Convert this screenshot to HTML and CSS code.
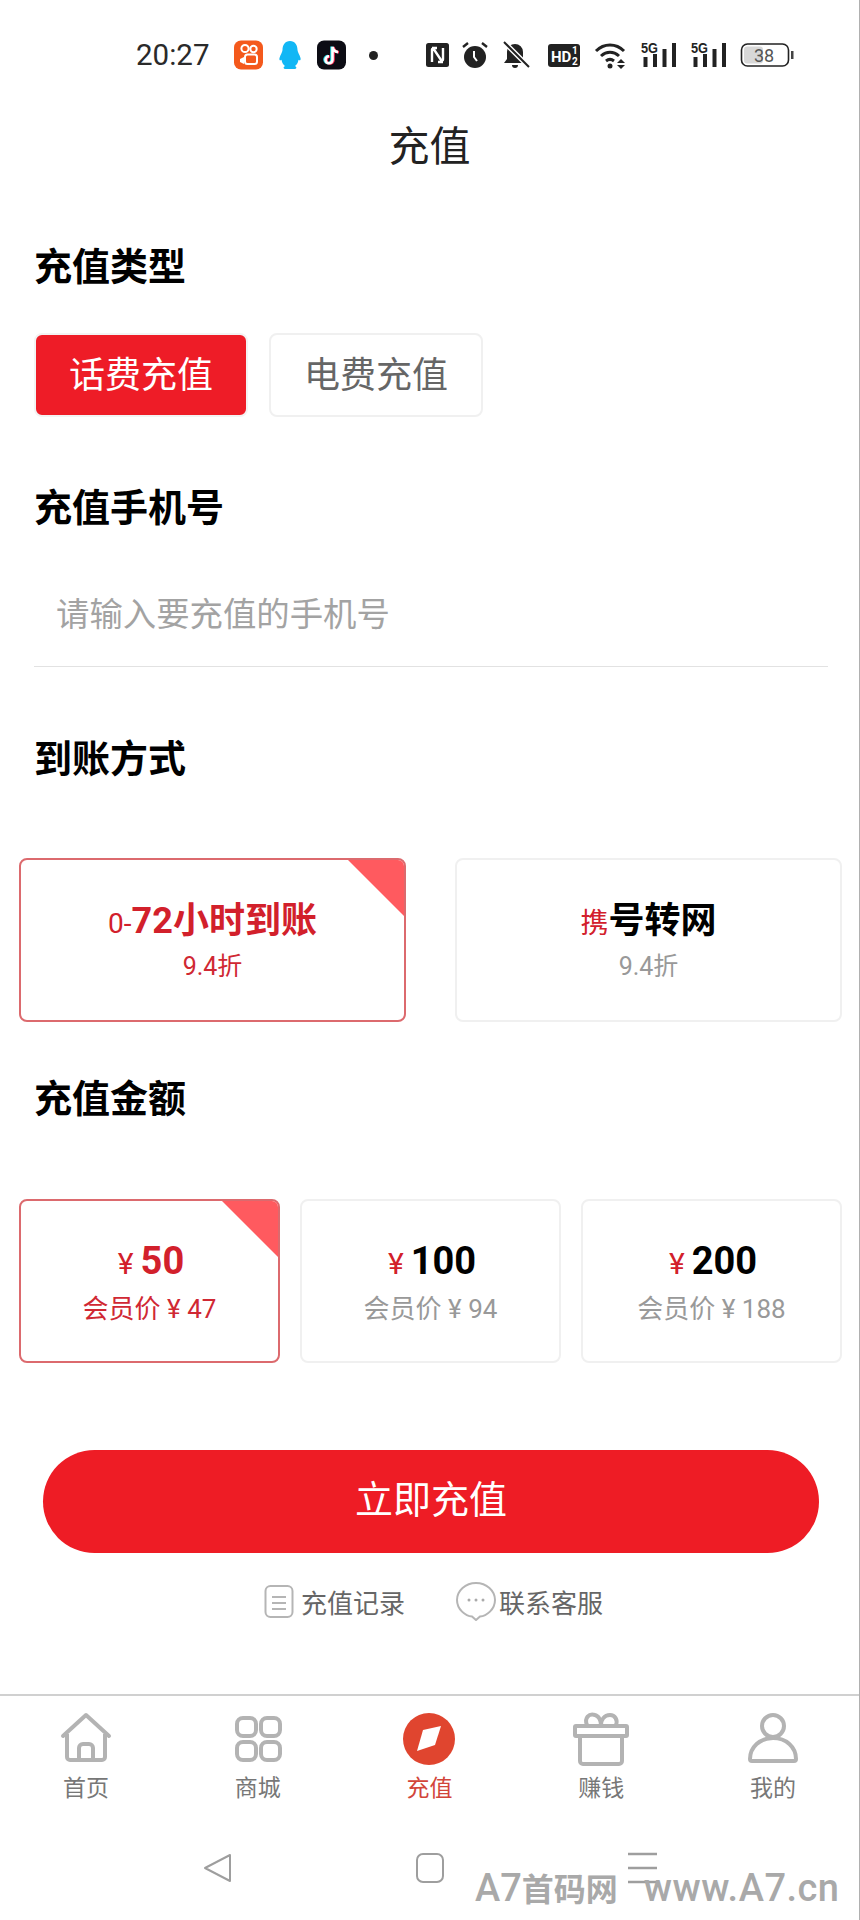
FILE: index.html
```html
<!DOCTYPE html>
<html lang="zh-CN">
<head>
	<meta charset="UTF-8"/>
	<title>充值</title>
	<link rel="stylesheet" href="styles.css">
</head>
<body>
	<div class="page">
		<div class="status">
			<span class="time">20:27</span>
			<div class="apps">
				<svg width="29" height="30" viewBox="0 0 29 30"><rect width="29" height="29" y="0.5" rx="7" fill="#f4591c"/><circle cx="11" cy="8.5" r="3.6" fill="none" stroke="#fff" stroke-width="2"/><circle cx="19.5" cy="9" r="3.2" fill="none" stroke="#fff" stroke-width="2"/><rect x="11" y="14.5" width="12" height="9.5" rx="2.5" fill="none" stroke="#fff" stroke-width="2"/><path d="M10 17l-4 2v3l4 2z" fill="#fff"/></svg>
				<svg width="24" height="30" viewBox="0 0 24 30"><path d="M12 1c5 0 7.500 4 7.500 9 0 2 2 4.500 3 8 .5 2-.5 3-2 1.800C20 23 18.500 25 17 26c2 1 2 3-1 3H8c-3 0-3-2-1-3-1.500-1-3-3-3.500-6.200C2 21 1 20 1.500 18c1-3.500 3-6 3-8 0-5 2.500-9 7.500-9z" fill="#12b7f5"/></svg>
				<svg width="29" height="30" viewBox="0 0 29 30"><rect width="29" height="29" y="0.500" rx="7" fill="#0c0c14"/><path d="M15.500 6v13a3.500 3.500 0 1 1-3.500-3.500M15.500 6c.5 3 2.500 5 5.500 5.300" fill="none" stroke="#25d9e6" stroke-width="2.600" transform="translate(-1 .6)"/><path d="M15.500 6v13a3.500 3.500 0 1 1-3.500-3.500M15.500 6c.5 3 2.500 5 5.500 5.300" fill="none" stroke="#fe2c55" stroke-width="2.600" transform="translate(1 1)"/><path d="M15.500 6v13a3.500 3.500 0 1 1-3.500-3.500M15.500 6c.5 3 2.500 5 5.500 5.300" fill="none" stroke="#fff" stroke-width="2.600" transform="translate(0 .8)"/></svg>
			</div>
			<i class="dot"></i>
			<div class="sys">
				<svg width="24" height="30" viewBox="0 0 24 30"><rect y="3" width="23" height="24" rx="2.500" fill="#222"/><path d="M6 22V9.500c0-1 1-1.200 1.700-.4L15 20c.6.800 2 .6 2-.4V8M6 8h5M17 22h-5" fill="none" stroke="#fff" stroke-width="2.400"/></svg>
				<svg width="28" height="30" viewBox="0 0 28 30"><circle cx="13" cy="17" r="11" fill="#222"/><path d="M12 11v6l3 4" fill="none" stroke="#fff" stroke-width="2"/><path d="M1 7l5-4M25 7l-5-4" stroke="#222" stroke-width="2.400"/></svg>
				<svg width="32" height="30" viewBox="0 0 32 30"><path d="M13 4a8 8 0 0 1 8 8v7l3 4H2l3-4v-7a8 8 0 0 1 8-8z" fill="#222"/><path d="M10 25a3 3 0 0 0 6 0z" fill="#222"/><path d="M2 2l25 25" stroke="#fff" stroke-width="5"/><path d="M2 2l25 25" stroke="#222" stroke-width="2"/></svg>
				<svg width="36" height="30" viewBox="0 0 36 30"><rect x="2" y="4" width="32" height="23" rx="3" fill="#222"/><text x="5" y="22" class="hd">HD</text><text x="26" y="14" class="hd-small">1</text><text x="26" y="25" class="hd-small">2</text></svg>
				<svg width="34" height="30" viewBox="0 0 34 30"><path d="M2 11c8-8 20-8 28 0M7 16c5.500-5 12.500-5 18 0M12 21c2.500-2 5.500-2 8 0" fill="none" stroke="#222" stroke-width="3"/><circle cx="16" cy="26" r="2.500" fill="#222"/><path d="M27 19l4 4h-8zM27 29l4-4h-8z" fill="#222"/></svg>
				<svg width="38" height="30" viewBox="0 0 38 30"><text x="1" y="13" class="five" textLength="17" lengthAdjust="spacingAndGlyphs">5G</text><rect x="3.500" y="17" width="4" height="10" fill="#222"/><rect x="13" y="14" width="4" height="13" fill="#222"/><rect x="22.500" y="9" width="4" height="18" fill="#222"/><rect x="32" y="3" width="4" height="24" fill="#222"/></svg>
				<svg width="38" height="30" viewBox="0 0 38 30"><text x="1" y="13" class="five" textLength="17" lengthAdjust="spacingAndGlyphs">5G</text><rect x="3.500" y="17" width="4" height="10" fill="#222"/><rect x="13" y="14" width="4" height="13" fill="#222"/><rect x="22.500" y="9" width="4" height="18" fill="#222"/><rect x="32" y="3" width="4" height="24" fill="#222"/></svg>
				<svg width="55" height="30" viewBox="0 0 55 30"><rect x="1.500" y="4" width="47" height="22" rx="6" fill="#fff" stroke="#222" stroke-width="1.600"/><rect x="4" y="6.500" width="19" height="17" rx="3" fill="#d8d8d8"/><text x="14" y="21.500" class="batt">38</text><rect x="51" y="11" width="2.500" height="8" fill="#444"/></svg>
			</div>
		</div>

		<div class="title">充值</div>

		<div class="heading first">充值类型</div>
		<div class="types">
			<div class="type active">话费充值</div>
			<div class="type">电费充值</div>
		</div>

		<div class="heading phone">充值手机号</div>
		<div class="field">请输入要充值的手机号</div>

		<div class="heading method">到账方式</div>
		<div class="cards">
			<div class="card wide on">
				<i class="corner"></i>
				<div class="card-main"><span class="thin">0-</span>72小时到账</div>
				<div class="card-sub">9.4折</div>
			</div>
			<div class="card wide">
				<div class="card-main"><span class="thin red">携</span>号转网</div>
				<div class="card-sub">9.4折</div>
			</div>
		</div>

		<div class="heading amount">充值金额</div>
		<div class="cards prices">
			<div class="card on">
				<i class="corner"></i>
				<div class="card-price"><span class="yen">¥</span>50</div>
				<div class="card-vip">会员价 ¥ 47</div>
			</div>
			<div class="card">
				<div class="card-price"><span class="yen">¥</span>100</div>
				<div class="card-vip">会员价 ¥ 94</div>
			</div>
			<div class="card">
				<div class="card-price"><span class="yen">¥</span>200</div>
				<div class="card-vip">会员价 ¥ 188</div>
			</div>
		</div>

		<div class="submit">立即充值</div>

		<div class="links">
			<div class="link">
				<svg width="30" height="36" viewBox="0 0 30 36"><rect x="1.500" y="3" width="27" height="31" rx="5" fill="none" stroke="#b5b5b5" stroke-width="2"/><path d="M9 2h12" stroke="#fff" stroke-width="4"/><path d="M9 3h12M8 14h14M8 20h14M8 26h14" stroke="#b5b5b5" stroke-width="1.800"/></svg>
				<span>充值记录</span>
			</div>
			<div class="link chat">
				<svg width="40" height="40" viewBox="0 0 40 40"><path d="M20 2c10.500 0 19 7.500 19 17s-8.500 16-15 16.500L20 39l-4-3.500C9.500 35 1 28.500 1 19S9.500 2 20 2z" fill="none" stroke="#b5b5b5" stroke-width="2"/><circle cx="13" cy="19" r="1.500" fill="#aaa"/><circle cx="20" cy="19" r="1.500" fill="#aaa"/><circle cx="27" cy="19" r="1.500" fill="#aaa"/></svg>
				<span>联系客服</span>
			</div>
		</div>

		<div class="tabs">
			<div class="tab">
				<svg width="60" height="60" viewBox="0 0 60 60"><path d="M7 27L30 6l23 21" fill="none" stroke="#b3b3b3" stroke-width="4" stroke-linejoin="round" stroke-linecap="round"/><path d="M11 25v23a3 3 0 0 0 3 3h32a3 3 0 0 0 3-3V25" fill="none" stroke="#b3b3b3" stroke-width="4"/><path d="M23 51V39a4 4 0 0 1 4-4h6a4 4 0 0 1 4 4v12" fill="none" stroke="#b3b3b3" stroke-width="4"/></svg>
				<span>首页</span>
			</div>
			<div class="tab">
				<svg width="60" height="60" viewBox="0 0 60 60"><rect x="9" y="9" width="19" height="18" rx="6" fill="none" stroke="#b3b3b3" stroke-width="4"/><rect x="33" y="9" width="19" height="18" rx="6" fill="none" stroke="#b3b3b3" stroke-width="4"/><rect x="9" y="33" width="19" height="18" rx="6" fill="none" stroke="#b3b3b3" stroke-width="4"/><rect x="33" y="33" width="19" height="18" rx="6" fill="none" stroke="#b3b3b3" stroke-width="4"/></svg>
				<span>商城</span>
			</div>
			<div class="tab current">
				<svg width="60" height="60" viewBox="0 0 60 60"><circle cx="30" cy="30" r="26" fill="#e0452f"/><path d="M24 21l18-4-6 19-18 6z" fill="#fff"/></svg>
				<span>充值</span>
			</div>
			<div class="tab">
				<svg width="60" height="60" viewBox="0 0 60 60"><path d="M5 17h50a1 1 0 0 1 1 1v8a1 1 0 0 1-1 1H5a1 1 0 0 1-1-1v-8a1 1 0 0 1 1-1z" fill="none" stroke="#b3b3b3" stroke-width="4"/><path d="M9 27v25a3 3 0 0 0 3 3h36a3 3 0 0 0 3-3V27" fill="none" stroke="#b3b3b3" stroke-width="4"/><path d="M16 16c-3-7 2-12 8-10 4 1 6 6 6 10M30 16c0-5 3-10 9-10 5 0 8 5 6 10" fill="none" stroke="#b3b3b3" stroke-width="4"/></svg>
				<span>赚钱</span>
			</div>
			<div class="tab">
				<svg width="60" height="60" viewBox="0 0 60 60"><circle cx="30" cy="17" r="11" fill="none" stroke="#b3b3b3" stroke-width="4"/><path d="M7 50c0-12 10-21 23-21s23 9 23 21a2 2 0 0 1-2 2H9a2 2 0 0 1-2-2z" fill="none" stroke="#b3b3b3" stroke-width="4"/></svg>
				<span>我的</span>
			</div>
		</div>

		<div class="nav">
			<svg width="32" height="32" viewBox="0 0 32 32"><path d="M28 3v26L3 16z" fill="none" stroke="#9e9e9e" stroke-width="2" stroke-linejoin="round"/></svg>
			<svg width="32" height="32" viewBox="0 0 32 32"><rect x="3" y="2" width="26" height="28" rx="6" fill="none" stroke="#9e9e9e" stroke-width="2"/></svg>
			<svg width="32" height="32" viewBox="0 0 32 32"><path d="M2 2h29M2 16h29M2 30h29" stroke="#9e9e9e" stroke-width="2.400"/></svg>
		</div>
		<div class="mark"><span><b class="mark-latin">A7</b>首码网</span><span class="mark-latin url">www.A7.cn</span></div>
	</div>
</body>
</html>
```

FILE: styles.css
```css
* { margin: 0; padding: 0; box-sizing: border-box; }
body {
	background-color: #fff;
	font-family: Roboto, "Noto Sans CJK SC", sans-serif;
	color: #000;
}
i { display: block; }
svg { display: block; flex: none; }
.page {
	position: relative;
	width: 860px;
	height: 1920px;
	overflow: hidden;
	border-right: 1px solid #b0b0b0;
}

.status {
	display: flex;
	align-items: center;
	height: 110px;
	padding-left: 136px;
}
.time { font-size: 29.500px; color: #2a2a2a; width: 98px; }
.apps { display: flex; gap: 15px; }
.dot {
	width: 9px;
	height: 9px;
	margin: 0 48px 0 23px;
	border-radius: 50%;
	background-color: #222;
}
.sys { display: flex; gap: 12px; }
.hd { font: bold 15px Roboto, sans-serif; fill: #fff; }
.hd-small { font: bold 10px Roboto, sans-serif; fill: #fff; }
.five { font: bold 14px "Liberation Sans", sans-serif; fill: #222; }
.batt { font: 18px Roboto, sans-serif; fill: #555; }

.title {
	height: 72px;
	line-height: 74px;
	text-align: center;
	font-size: 41px;
	color: #222;
}

.heading {
	height: 50px;
	line-height: 52px;
	padding-left: 34px;
	font-size: 38px;
	font-weight: 700;
}
.first { margin-top: 59px; }
.phone { margin-top: 65px; }
.method { margin-top: 66px; }
.amount { margin-top: 51px; }

.types {
	display: flex;
	gap: 21px;
	margin-top: 42px;
	padding-left: 34px;
}
.type {
	width: 214px;
	height: 84px;
	line-height: 82px;
	text-align: center;
	font-size: 36px;
	color: #666;
	border: 2px solid #f0f0f0;
	border-radius: 8px;
}
.active {
	color: #fff;
	background-color: #ee1c27;
	border-color: #f3f3f3;
}

.field {
	height: 135px;
	margin: 0 31px 0 34px;
	padding: 58px 0 0 22px;
	line-height: 50px;
	font-size: 33.400px;
	color: #a3a3a3;
	border-bottom: 1px solid #e2e2e2;
}

.cards {
	display: flex;
	justify-content: space-between;
	margin-top: 75px;
	padding: 0 17px 0 19px;
}
.prices { margin-top: 76px; }
.card {
	position: relative;
	display: flex;
	flex-direction: column;
	align-items: center;
	width: 261px;
	height: 164px;
	overflow: hidden;
	border: 2px solid #f0f0f0;
	border-radius: 8px;
	color: #999;
}
.wide { width: 387px; }
.on {
	border-color: #dc6a6e;
	color: #d02833;
}
.corner {
	position: absolute;
	top: -2px;
	right: -2px;
	width: 60px;
	height: 60px;
	background-color: #ff5a5f;
	clip-path: polygon(0 0, 100% 0, 100% 100%);
}
.card-main {
	margin-top: 38px;
	height: 46px;
	line-height: 46px;
	font-size: 36px;
	font-weight: 700;
	color: #000;
}
.on .card-main { color: #d2202b; }
.thin { font-size: 28px; font-weight: 400; }
.red { color: #d2202b; }
.card-sub {
	margin-top: 5px;
	line-height: 36px;
	font-size: 25px;
}
.card-price {
	margin-top: 36px;
	padding-left: 3px;
	height: 48px;
	line-height: 48px;
	font-size: 38px;
	font-weight: 700;
	color: #000;
}
.on .card-price { color: #d2202b; }
.yen {
	margin-right: 7px;
	font-size: 30px;
	font-weight: 400;
	color: #d2202b;
}
.card-vip {
	margin-top: 4px;
	line-height: 40px;
	font-size: 26px;
}

.submit {
	height: 103px;
	margin: 87px 40px 0 43px;
	line-height: 101px;
	text-align: center;
	font-size: 38px;
	color: #fff;
	background-color: #ee1c25;
	border-radius: 52px;
}

.links {
	display: flex;
	justify-content: center;
	align-items: center;
	gap: 51px;
	height: 50px;
	margin-top: 23px;
	padding-left: 8px;
	font-size: 26px;
	color: #666;
}
.link { display: flex; align-items: center; gap: 7px; }
.chat { gap: 3px; }

.tabs {
	display: flex;
	height: 126px;
	margin-top: 68px;
	padding-top: 13px;
	border-top: 2px solid #d0d0d0;
}
.tab {
	flex: 1;
	display: flex;
	flex-direction: column;
	align-items: center;
	gap: 5px;
	font-size: 23px;
	line-height: 30px;
	color: #777;
}
.current { color: #d2453a; }

.nav {
	display: flex;
	justify-content: space-between;
	width: 456px;
	margin: 32px 0 0 202px;
}

.mark {
	position: absolute;
	top: 1866px;
	left: 475px;
	display: flex;
	align-items: baseline;
	gap: 26px;
	font-size: 32px;
	font-weight: 700;
	color: #a9a9a9;
	line-height: 44px;
}
.mark-latin { font-size: 38px; font-weight: 500; }
.url { letter-spacing: 0.500px; }
```
